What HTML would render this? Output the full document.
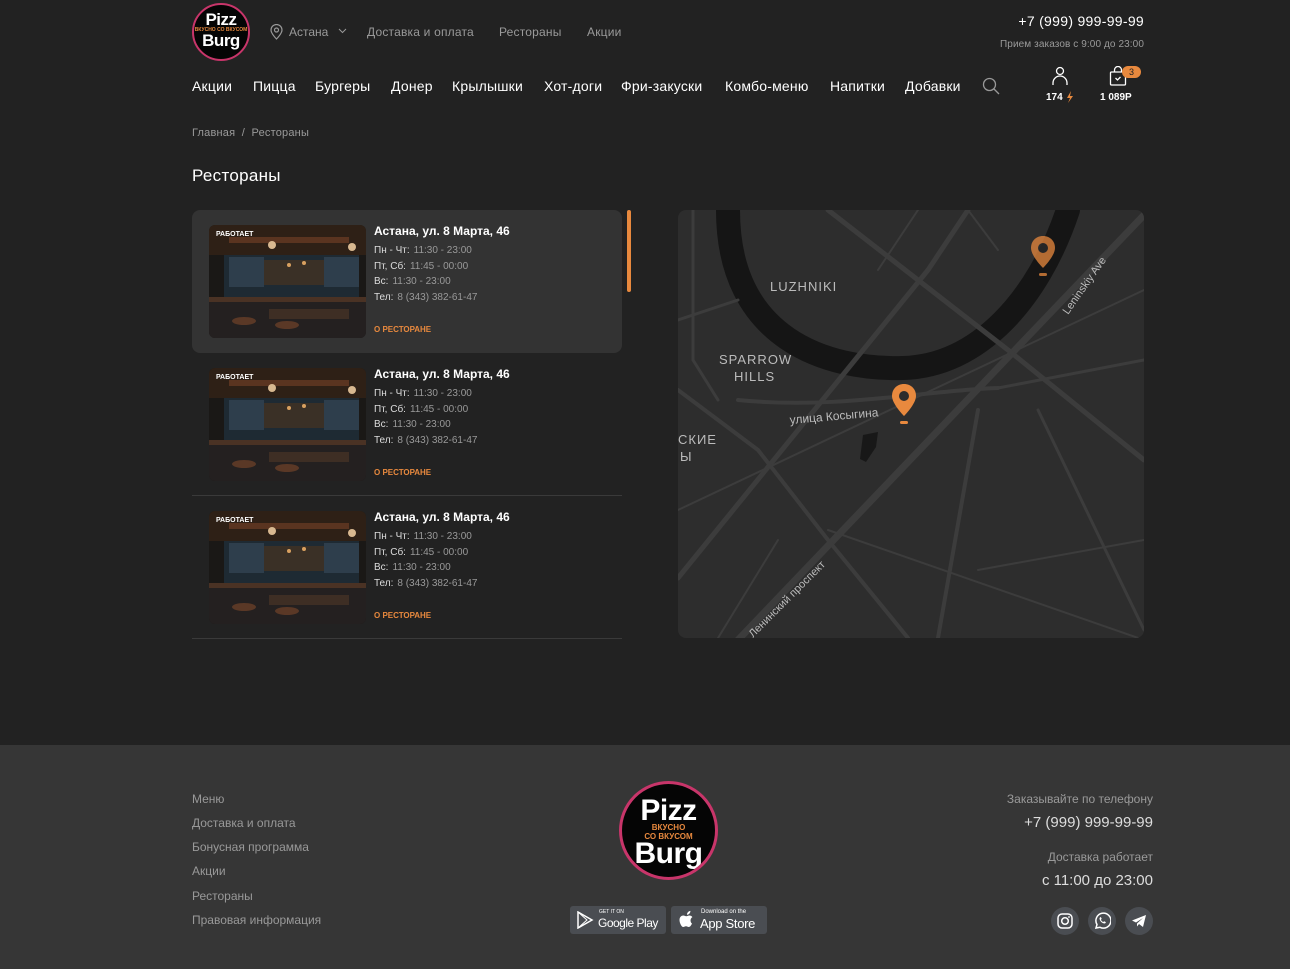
<!DOCTYPE html>
<html><head><meta charset="utf-8"><style>
*{margin:0;padding:0;box-sizing:border-box}
body{width:1290px;height:969px;background:#222222;font-family:"Liberation Sans",sans-serif;color:#fff;position:relative;overflow:hidden}
.a{position:absolute;white-space:nowrap}
.g{color:#9a9a9a}
.logo{border-radius:50%;background:#050505;border:2px solid #c8356a;text-align:center;overflow:hidden}
.logo b{display:block;font-family:"Liberation Sans",sans-serif;font-weight:900;color:#fff;letter-spacing:-0.5px}
.logo i{display:block;font-style:normal;color:#e8893e;font-weight:bold}
.nav{font-size:14px;top:78px;letter-spacing:0.2px}
.card{position:absolute;left:192px;width:430px;height:143px}
.card.act{background:#333;border-radius:8px}
.card .img{position:absolute;left:17px;top:15px;width:157px;height:113px;border-radius:6px;overflow:hidden}
.card .t{position:absolute;left:182px;top:14px;font-size:12px;font-weight:bold}
.card .l{position:absolute;left:182px;font-size:10px;color:#ddd}
.card .l span{color:#999;margin-left:4px}
.card .o{position:absolute;left:182px;top:115px;font-size:8px;color:#e8893e;font-weight:bold}
.card .w{position:absolute;left:7px;top:6px;font-size:7px;font-weight:bold;color:#fff}
.sep{border-bottom:1px solid #3a3a3a}
.foot{position:absolute;left:0;top:745px;width:1290px;height:224px;background:#363636}
.fl{font-size:12px;color:#999;left:192px}
.btn{position:absolute;top:906px;height:28px;background:#4a4d52;border-radius:3px}
.soc{position:absolute;top:907px;width:28px;height:28px;border-radius:50%;background:#4a4d52}
</style></head><body>
<svg width="0" height="0" style="position:absolute"><defs>
<symbol id="bar" viewBox="0 0 157 113">
<rect width="157" height="113" fill="#1a1816"/>
<rect x="0" y="0" width="157" height="30" fill="#2e2016"/>
<rect x="20" y="12" width="120" height="6" fill="#5a3420"/>
<rect x="15" y="30" width="135" height="45" fill="#1e2a33"/>
<rect x="20" y="32" width="35" height="30" fill="#2e3e4c"/>
<rect x="115" y="32" width="35" height="30" fill="#2e3e4c"/>
<rect x="55" y="35" width="60" height="25" fill="#3a3026"/>
<circle cx="63" cy="20" r="4" fill="#d8b890"/>
<circle cx="143" cy="22" r="4" fill="#d8b890"/>
<circle cx="80" cy="40" r="2" fill="#d8a060"/><circle cx="95" cy="38" r="2" fill="#d8a060"/>
<rect x="0" y="72" width="157" height="5" fill="#4a3224"/>
<rect x="0" y="77" width="157" height="36" fill="#242020"/>
<rect x="60" y="84" width="80" height="10" fill="#3e2e24"/>
<ellipse cx="35" cy="96" rx="12" ry="4" fill="#5a3826"/>
<ellipse cx="78" cy="100" rx="12" ry="4" fill="#5a3826"/>
</symbol>
<symbol id="pin" viewBox="0 0 26 42">
<path d="M13 1C6 1 1 6 1 13c0 8 12 20 12 20s12-12 12-20C25 6 20 1 13 1z" fill="#e8893e"/>
<circle cx="13" cy="13" r="5" fill="#2c2c2c"/>
<rect x="9" y="38" width="8" height="3" rx="1.5" fill="#e8893e"/>
</symbol>
</defs></svg>

<div class="a logo" style="left:192px;top:3px;width:58px;height:58px;padding-top:8px">
<b style="font-size:17px;line-height:14px">Pizz</b><i style="font-size:5px;line-height:6px">ВКУСНО СО ВКУСОМ</i><b style="font-size:17px;line-height:16px">Burg</b></div>
<svg class="a" style="left:270px;top:24px" width="13" height="16" viewBox="0 0 13 16"><path d="M6.5 15S1 9.5 1 6a5.5 5.5 0 0 1 11 0c0 3.5-5.5 9-5.5 9z" fill="none" stroke="#999" stroke-width="1.2"/><circle cx="6.5" cy="6" r="2" fill="none" stroke="#999" stroke-width="1.2"/></svg>
<div class="a g" style="left:289px;top:25px;font-size:12px">Астана</div>
<svg class="a" style="left:338px;top:28px" width="9" height="6"><path d="M1 1l3.5 3.5L8 1" stroke="#999" fill="none"/></svg>
<div class="a g" style="left:367px;top:25px;font-size:12px;letter-spacing:0.2px">Доставка и оплата</div>
<div class="a g" style="left:499px;top:25px;font-size:12px;letter-spacing:0.2px">Рестораны</div>
<div class="a g" style="left:587px;top:25px;font-size:12px;letter-spacing:0.2px">Акции</div>
<div class="a" style="right:146px;top:13px;font-size:14px;letter-spacing:0.3px">+7 (999) 999-99-99</div>
<div class="a g" style="right:146px;top:39px;font-size:10px;letter-spacing:0.1px">Прием заказов с 9:00 до 23:00</div>

<div class="a nav" style="left:192px">Акции</div>
<div class="a nav" style="left:253px">Пицца</div>
<div class="a nav" style="left:315px">Бургеры</div>
<div class="a nav" style="left:391px">Донер</div>
<div class="a nav" style="left:452px">Крылышки</div>
<div class="a nav" style="left:544px">Хот-доги</div>
<div class="a nav" style="left:621px">Фри-закуски</div>
<div class="a nav" style="left:725px">Комбо-меню</div>
<div class="a nav" style="left:830px">Напитки</div>
<div class="a nav" style="left:905px">Добавки</div>
<svg class="a" style="left:982px;top:77px" width="18" height="18"><circle cx="7.5" cy="7.5" r="6" fill="none" stroke="#999" stroke-width="1.3"/><path d="M12 12l5 5" stroke="#999" stroke-width="1.3"/></svg>
<svg class="a" style="left:1051px;top:66px" width="18" height="20"><circle cx="9" cy="5" r="3.5" fill="none" stroke="#fff" stroke-width="1.3"/><path d="M2 19v-2a7 7 0 0 1 14 0v2" fill="none" stroke="#fff" stroke-width="1.3"/></svg>
<div class="a" style="left:1046px;top:92px;font-size:10px;font-weight:bold">174</div>
<svg class="a" style="left:1066px;top:91px" width="7" height="12"><path d="M5 0L1 7h3L2 12l5-7H4z" fill="#e8893e"/></svg>
<svg class="a" style="left:1109px;top:66px" width="18" height="20"><rect x="1.5" y="6" width="15" height="13" rx="1" fill="none" stroke="#fff" stroke-width="1.3"/><path d="M5.5 6V4a3.5 3.5 0 0 1 7 0v2M6.5 12l2 2 3-3" fill="none" stroke="#fff" stroke-width="1.3"/></svg>
<div class="a" style="left:1122px;top:66px;width:19px;height:12px;border-radius:6px;background:#e8893e;color:#222;font-size:9px;text-align:center;line-height:12px">3</div>
<div class="a" style="left:1100px;top:92px;font-size:10px;font-weight:bold">1 089Р</div>

<div class="a g" style="left:192px;top:127px;font-size:11px;letter-spacing:0.2px">Главная &nbsp;/&nbsp; Рестораны</div>
<div class="a" style="left:192px;top:166px;font-size:17px;letter-spacing:0.3px">Рестораны</div>

<div class="card act" style="top:210px">
<div class="img"><svg width="157" height="113"><use href="#bar"/></svg><div class="w">РАБОТАЕТ</div></div>
<div class="t">Астана, ул. 8 Марта, 46</div>
<div class="l" style="top:35px">Пн - Чт:<span>11:30 - 23:00</span></div>
<div class="l" style="top:51px">Пт, Сб:<span>11:45 - 00:00</span></div>
<div class="l" style="top:66px">Вс:<span>11:30 - 23:00</span></div>
<div class="l" style="top:82px">Тел:<span>8 (343) 382-61-47</span></div>
<div class="o">О РЕСТОРАНЕ</div></div>
<div class="card sep" style="top:353px">
<div class="img"><svg width="157" height="113"><use href="#bar"/></svg><div class="w">РАБОТАЕТ</div></div>
<div class="t">Астана, ул. 8 Марта, 46</div>
<div class="l" style="top:35px">Пн - Чт:<span>11:30 - 23:00</span></div>
<div class="l" style="top:51px">Пт, Сб:<span>11:45 - 00:00</span></div>
<div class="l" style="top:66px">Вс:<span>11:30 - 23:00</span></div>
<div class="l" style="top:82px">Тел:<span>8 (343) 382-61-47</span></div>
<div class="o">О РЕСТОРАНЕ</div></div>
<div class="card sep" style="top:496px">
<div class="img"><svg width="157" height="113"><use href="#bar"/></svg><div class="w">РАБОТАЕТ</div></div>
<div class="t">Астана, ул. 8 Марта, 46</div>
<div class="l" style="top:35px">Пн - Чт:<span>11:30 - 23:00</span></div>
<div class="l" style="top:51px">Пт, Сб:<span>11:45 - 00:00</span></div>
<div class="l" style="top:66px">Вс:<span>11:30 - 23:00</span></div>
<div class="l" style="top:82px">Тел:<span>8 (343) 382-61-47</span></div>
<div class="o">О РЕСТОРАНЕ</div></div>
<div class="a" style="left:627px;top:210px;width:4px;height:82px;background:#e8893e;border-radius:2px"></div>

<svg class="a" style="left:678px;top:210px;border-radius:8px" width="466" height="428" viewBox="0 0 466 428">
<rect width="466" height="428" fill="#2d2d2d"/>
<g stroke="#3c3c3c" fill="none" stroke-linecap="round">
<path d="M 50 0 C 50 130 150 160 225 158 C 300 156 360 90 390 0" stroke="#151515" stroke-width="24"/>
<path d="M60 430 L466 5" stroke-width="7"/>
<path d="M0 368 L250 60 L290 0" stroke-width="5"/>
<path d="M150 0 L330 140 L466 250" stroke-width="5"/>
<path d="M60 190 C160 200 250 180 320 178" stroke-width="4"/>
<path d="M320 178 L466 150" stroke-width="3"/>
<path d="M0 180 L80 240 L150 330 L230 428" stroke-width="4"/>
<path d="M0 300 L466 80" stroke-width="2"/>
<path d="M300 200 L260 428" stroke-width="4"/>
<path d="M360 200 L466 420" stroke-width="3"/>
<path d="M0 110 L60 90" stroke-width="3"/>
<path d="M150 320 L466 430" stroke-width="2"/>
<path d="M240 0 L200 60 M290 0 L320 40" stroke-width="2"/>
<path d="M15 0 L15 150 L40 190" stroke-width="3"/>
<path d="M100 330 L40 428 M300 360 L466 330" stroke-width="2"/>
</g>
<path d="M185 225 l15 -3 l-2 15 l-10 15 l-6 -3 z" fill="#181818"/>
<g font-family="Liberation Sans, sans-serif" fill="#bbb" font-size="13" letter-spacing="1">
<text x="92" y="81">LUZHNIKI</text>
<text x="41" y="154">SPARROW</text><text x="56" y="171">HILLS</text>
<text x="0" y="234">СКИЕ</text><text x="2" y="251">Ы</text>
<text x="112" y="214" font-size="12" letter-spacing="0" transform="rotate(-5 112 214)">улица Косыгина</text>
<text x="390" y="105" font-size="11" letter-spacing="0" transform="rotate(-55 390 105)">Leninskiy Ave</text>
<text x="75" y="428" font-size="11" letter-spacing="0" transform="rotate(-45 75 428)">Ленинский проспект</text>
</g>
<use href="#pin" x="213" y="173" width="26" height="42"/>
<use href="#pin" x="352" y="25" width="26" height="42" opacity="0.75"/>
</svg>

<div class="foot"></div>
<div class="a fl" style="top:792px">Меню</div>
<div class="a fl" style="top:816px">Доставка и оплата</div>
<div class="a fl" style="top:840px">Бонусная программа</div>
<div class="a fl" style="top:864px">Акции</div>
<div class="a fl" style="top:889px">Рестораны</div>
<div class="a fl" style="top:913px">Правовая информация</div>

<div class="a logo" style="left:619px;top:781px;width:99px;height:99px;border-width:3px;padding-top:15px">
<b style="font-size:30px;line-height:24px">Pizz</b><i style="font-size:8px;line-height:9px">ВКУСНО<br>СО ВКУСОМ</i><b style="font-size:30px;line-height:26px">Burg</b></div>

<div class="btn" style="left:570px;width:96px">
<svg class="a" style="left:6px;top:5px" width="18" height="18"><path d="M2 1l14 8-14 8z" fill="none" stroke="#fff" stroke-width="1.5"/><path d="M2 1l9 8-9 8" fill="none" stroke="#fff" stroke-width="1"/></svg>
<div class="a" style="left:29px;top:3px;font-size:5px">GET IT ON</div>
<div class="a" style="left:28px;top:10px;font-size:12px;letter-spacing:-0.5px">Google Play</div></div>
<div class="btn" style="left:671px;width:96px">
<svg class="a" style="left:8px;top:4px" width="16" height="19" viewBox="0 0 16 19"><path d="M13 13.5c-.7 1.6-1.8 3.5-3.2 3.5-1.2 0-1.5-.7-2.8-.7s-1.7.7-2.8.7C2.6 17 .5 13 .5 10c0-3 2-4.5 3.8-4.5 1.2 0 2 .8 3 .8s1.7-.8 3.1-.8c1 0 2.3.5 3 1.6-2.6 1.5-2.2 5.3-.4 6.4zM10.5 3.5c-.6.8-1.6 1.3-2.5 1.2-.1-1 .4-2 1-2.6.6-.7 1.6-1.2 2.4-1.2.1 1-.3 1.9-.9 2.6z" fill="#fff"/></svg>
<div class="a" style="left:30px;top:3px;font-size:6px">Download on the</div>
<div class="a" style="left:29px;top:10px;font-size:13px;letter-spacing:-0.3px">App Store</div></div>

<div class="a g" style="right:137px;top:792px;font-size:12px">Заказывайте по телефону</div>
<div class="a" style="right:137px;top:814px;font-size:15px;color:#ddd">+7 (999) 999-99-99</div>
<div class="a g" style="right:137px;top:850px;font-size:12px">Доставка работает</div>
<div class="a" style="right:137px;top:872px;font-size:15px;color:#ddd">с 11:00 до 23:00</div>
<div class="soc" style="left:1051px"><svg class="a" style="left:6px;top:6px" width="16" height="16"><rect x="1" y="1" width="14" height="14" rx="4" fill="none" stroke="#fff" stroke-width="1.5"/><circle cx="8" cy="8" r="3.3" fill="none" stroke="#fff" stroke-width="1.5"/><circle cx="12" cy="4" r="0.9" fill="#fff"/></svg></div>
<div class="soc" style="left:1088px"><svg class="a" style="left:5px;top:5px" width="18" height="18"><path d="M3 16l1-3.5A7.5 7.5 0 1 1 7 15.3z" fill="none" stroke="#fff" stroke-width="1.5"/><path d="M6.5 6c0 3 2.5 5.5 5.5 5.5l1-1.3-1.8-1-1 .8c-1-.5-1.8-1.3-2.3-2.3l.8-1-1-1.8z" fill="#fff"/></svg></div>
<div class="soc" style="left:1125px"><svg class="a" style="left:6px;top:7px" width="16" height="14"><path d="M1 6.5L15 1l-3 12-4-3-2 2.5V9.5L12 4 5 8.5z" fill="#fff"/></svg></div>
</body></html>
